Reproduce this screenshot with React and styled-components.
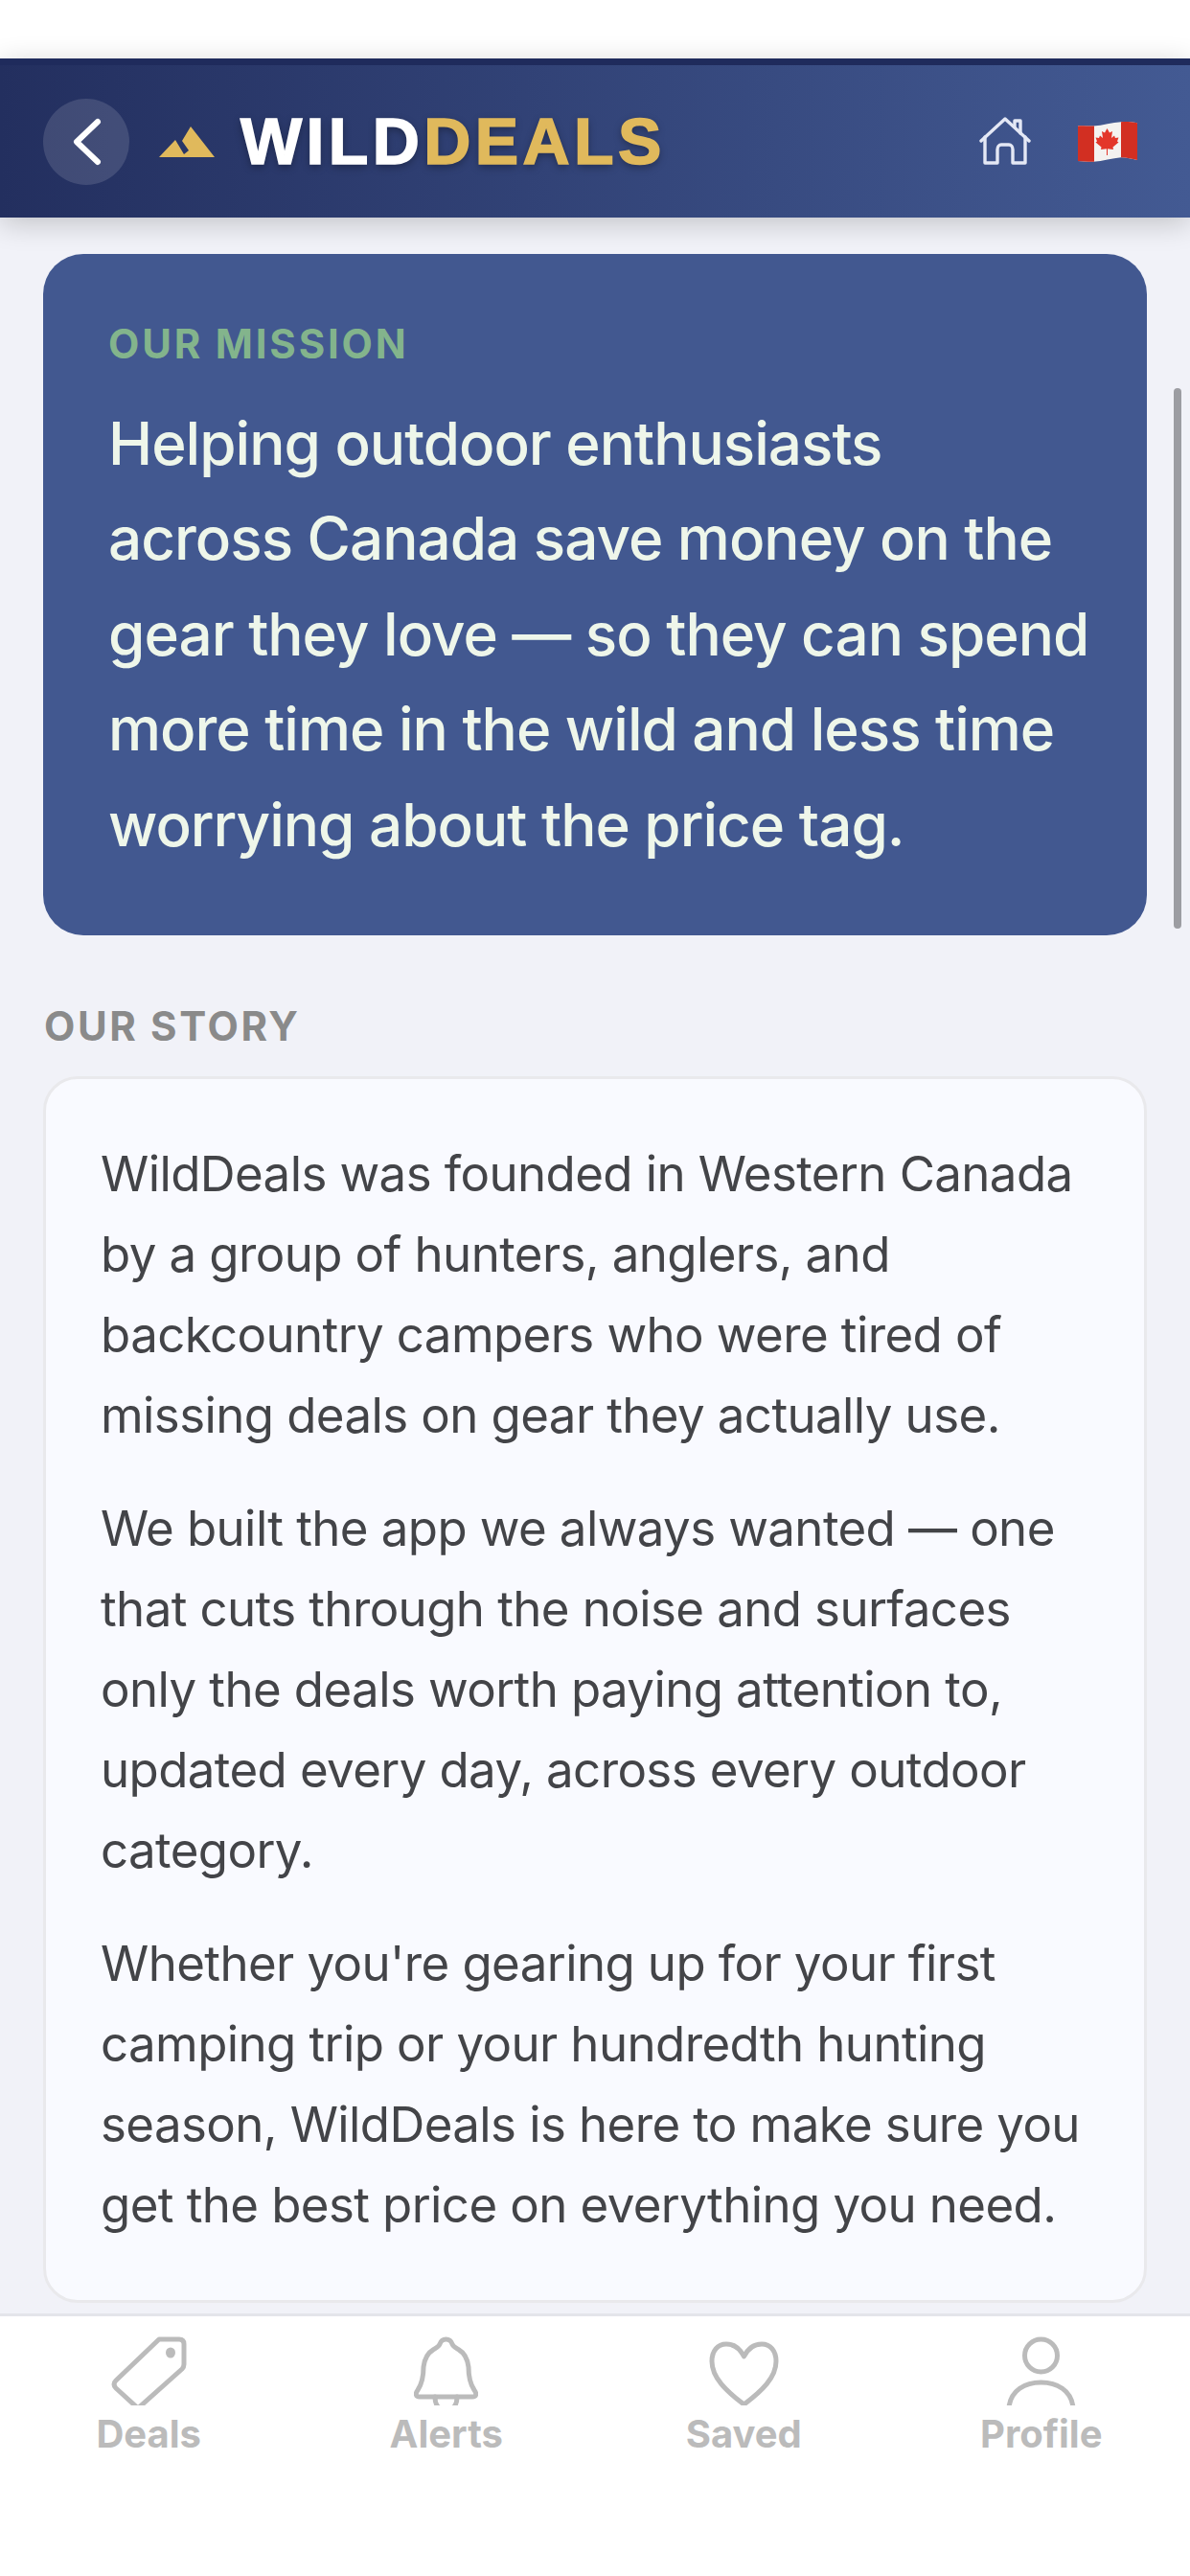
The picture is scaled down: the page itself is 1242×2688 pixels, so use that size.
import React from 'react';
import styled, { createGlobalStyle } from 'styled-components';

const GlobalStyle = createGlobalStyle`
  html, body { margin: 0; padding: 0; background: #fff; }
  * { box-sizing: border-box; }
`

const Screen = styled.div`
  width: 1242px;
  height: 2688px;
  display: flex;
  flex-direction: column;
  overflow: hidden;
  background: #fff;
  font-family: Inter, "Liberation Sans", sans-serif;
`

const SafeArea = styled.div`
  height: 61px;
  flex: none;
  background: #fff;
`

const Header = styled.header`
  position: relative;
  z-index: 2;
  height: 166px;
  flex: none;
  display: flex;
  align-items: center;
  padding: 0 55px 0 45px;
  border-top: 7px solid #1f2b5c;
  background: linear-gradient(90deg, #232f5f 0%, #435a93 100%);
  box-shadow: 0 6px 28px rgba(0, 0, 0, 0.2);
`

const BackButton = styled.div`
  width: 90px;
  height: 90px;
  flex: none;
  display: flex;
  align-items: center;
  justify-content: center;
  border-radius: 50%;
  background: rgba(255, 255, 255, 0.13);
`

const Logo = styled.div`
  display: flex;
  align-items: center;
  margin-left: 31px;
  flex: 1;
`

const LogoText = styled.div`
  margin: -2px 0 0 27px;
  font-family: "Liberation Sans", Arial, sans-serif;
  font-weight: 700;
  font-size: 68px;
  line-height: 1;
  letter-spacing: 4.4px;
  color: #fff;
  -webkit-text-stroke: 1.6px currentColor;
  text-shadow: 0 3px 8px rgba(0, 0, 0, 0.35);

  span {
    color: #e0b95c;
  }
`

const HeaderActions = styled.div`
  display: flex;
  align-items: center;
  gap: 49px;
`

const Content = styled.main`
  position: relative;
  flex: 1;
  min-height: 0;
  overflow: hidden;
  padding: 38px 45px 0;
  background: #f1f2f8;
`

const ScrollThumb = styled.div`
  position: absolute;
  top: 178px;
  right: 9px;
  width: 8px;
  height: 564px;
  border-radius: 4px;
  background: #9c9da2;
`

const MissionCard = styled.section`
  height: 711px;
  padding: 69px 68px 0;
  border-radius: 42px;
  background: #425890;
`

const MissionLabel = styled.div`
  font-size: 42px;
  font-weight: 700;
  line-height: 50px;
  letter-spacing: 2.8px;
  color: #83b48c;
`

const MissionText = styled.p`
  margin: 29px 0 0;
  font-size: 62px;
  font-weight: 500;
  line-height: 99.4px;
  letter-spacing: -1px;
  white-space: nowrap;
  color: #eef6ea;
`

const SectionLabel = styled.h2`
  margin: 69px 0 0 1px;
  font-size: 42px;
  font-weight: 700;
  line-height: 52px;
  letter-spacing: 2.6px;
  color: #8a8a8a;
`

const StoryCard = styled.section`
  margin-top: 26px;
  height: 1280px;
  padding: 57px 57px 0;
  border: 3px solid #e9e9ec;
  border-radius: 36px;
  background: #f9faff;
`

const StoryText = styled.p`
  margin: 0 0 34px;
  font-size: 51px;
  font-weight: 400;
  line-height: 84px;
  letter-spacing: -0.6px;
  white-space: nowrap;
  color: #434448;
`

const TabBar = styled.nav`
  height: 274px;
  flex: none;
  display: grid;
  grid-template-columns: repeat(4, 1fr);
  padding-top: 21px;
  border-top: 3px solid #e4e5ea;
  background: #fff;
`

const Tab = styled.div`
  display: flex;
  flex-direction: column;
  align-items: center;
  color: #bbbbbb;
`

const TabIcon = styled.svg`
  display: block;
  height: 72px;
  fill: none;
  stroke: #bbbbbb;
  stroke-width: 5;
  stroke-linecap: round;
  stroke-linejoin: round;
  overflow: hidden;
`

const TabLabel = styled.span`
  margin-top: 7px;
  font-size: 40px;
  font-weight: 700;
  line-height: 46px;
`

const BackIcon = () => (
  <svg width="90" height="90" viewBox="0 0 90 90" fill="none">
    <path d="M57 24 L35 45 L57 66" stroke="#fff" strokeWidth="6" strokeLinecap="round" strokeLinejoin="round" />
  </svg>
)

const MountainIcon = () => (
  <svg width="58" height="32" viewBox="0 0 58 32">
    <path d="M33 0 L58 32 H0 L17 14 L26 29 L31 25 L24 15 Z" fill="#e0b95c" />
  </svg>
)

const HomeIcon = () => (
  <svg width="54" height="52" viewBox="0 0 54 52" fill="none" stroke="#e4e8f5" strokeWidth="3.4" strokeLinecap="round" strokeLinejoin="round">
    <path d="M2 25 L27 2 L52 25" />
    <path d="M6 21 V48 H19 V34 C19 31 21 29 23 29 H31 C33 29 35 31 35 34 V48 H48 V21" />
    <path d="M37 10 V4 H43 V17" />
  </svg>
)

const FlagIcon = () => (
  <svg width="62" height="42" viewBox="0 0 62 42">
    <defs>
      <clipPath id="flag-wave">
        <path d="M0 4.5 C6 3.5 10 5 16 4.5 C26 3.8 36 0.8 45 0.2 C51 -0.1 57 0.4 62 1.2 V40 C56 38.5 50 37 45 37.2 C36 37.8 26 41.2 16 41.8 C10 42 5 41 0 41 Z" />
      </clipPath>
    </defs>
    <g clipPath="url(#flag-wave)">
      <rect width="62" height="42" fill="#f4f2f0" />
      <rect width="17" height="42" fill="#d22f22" />
      <rect x="45" width="17" height="42" fill="#d22f22" />
    </g>
    <path
      d="M30.5 7 L33 11.5 L36 10 L35 17 L38 14.5 L39 17 L42.5 16.5 L41 20.5 L42.5 21.5 L36.5 26.5 L37 29 L31 28.3 V35 H30 V28.3 L24 29 L24.5 26.5 L18.5 21.5 L20 20.5 L18.5 16.5 L22 17 L23 14.5 L26 17 L25 10 L28 11.5 Z"
      fill="#e3362a"
    />
  </svg>
)

const tabs = [
  {
    label: 'Deals',
    width: 79,
    icon: (
      <>
        <path d="M50 3 H71 Q76 3 76 8 V29 Q76 32 74 34 L28 75 L5 54 Q1 50 5 46 Z" />
        <ellipse cx="62" cy="17" rx="5" ry="5.5" fill="#bbbbbb" stroke="none" />
      </>
    ),
  },
  {
    label: 'Alerts',
    width: 67,
    icon: (
      <>
        <path d="M33.5 3 C37 3 39 5 40 8 C41 11 44 12 47 14 C54 18 56 24 57 32 C57 44 59 50 63 56 C66 60 65 63 61 63 H6 C2 63 1 60 4 56 C8 50 10 44 10 32 C11 24 13 18 20 14 C23 12 26 11 27 8 C28 5 30 3 33.5 3 Z" />
        <path d="M22 63 C22 70 24 76 33.5 76 C43 76 45 70 45 63" />
      </>
    ),
  },
  {
    label: 'Saved',
    width: 73,
    icon: (
      <path d="M36.5 21 C32 12 26 8 18 8 C9 8 3 15 3 26 C3 43 18 57 36.5 71 C55 57 70 43 70 26 C70 15 64 8 55 8 C47 8 41 12 36.5 21 Z" />
    ),
  },
  {
    label: 'Profile',
    width: 73,
    icon: (
      <>
        <circle cx="36.5" cy="20" r="17" />
        <path d="M3 74 C5 56 20 48 36.5 48 C53 48 68 56 70 74" />
      </>
    ),
  },
]

const App = () => {
  return (
    <Screen>
      <GlobalStyle />
      <SafeArea />
      <Header>
        <BackButton>
          <BackIcon />
        </BackButton>
        <Logo>
          <MountainIcon />
          <LogoText>
            WILD<span>DEALS</span>
          </LogoText>
        </Logo>
        <HeaderActions>
          <HomeIcon />
          <FlagIcon />
        </HeaderActions>
      </Header>
      <Content>
        <ScrollThumb />
        <MissionCard>
          <MissionLabel>OUR MISSION</MissionLabel>
          <MissionText>
            Helping outdoor enthusiasts
            <br />
            across Canada save money on the
            <br />
            gear they love — so they can spend
            <br />
            more time in the wild and less time
            <br />
            worrying about the price tag.
          </MissionText>
        </MissionCard>
        <SectionLabel>OUR STORY</SectionLabel>
        <StoryCard>
          <StoryText>
            WildDeals was founded in Western Canada
            <br />
            by a group of hunters, anglers, and
            <br />
            backcountry campers who were tired of
            <br />
            missing deals on gear they actually use.
          </StoryText>
          <StoryText>
            We built the app we always wanted — one
            <br />
            that cuts through the noise and surfaces
            <br />
            only the deals worth paying attention to,
            <br />
            updated every day, across every outdoor
            <br />
            category.
          </StoryText>
          <StoryText>
            Whether you're gearing up for your first
            <br />
            camping trip or your hundredth hunting
            <br />
            season, WildDeals is here to make sure you
            <br />
            get the best price on everything you need.
          </StoryText>
        </StoryCard>
      </Content>
      <TabBar>
        {tabs.map((tab) => (
          <Tab key={tab.label}>
            <TabIcon width={tab.width} viewBox={`0 0 ${tab.width} 72`}>
              {tab.icon}
            </TabIcon>
            <TabLabel>{tab.label}</TabLabel>
          </Tab>
        ))}
      </TabBar>
    </Screen>
  );
};

export default App;
